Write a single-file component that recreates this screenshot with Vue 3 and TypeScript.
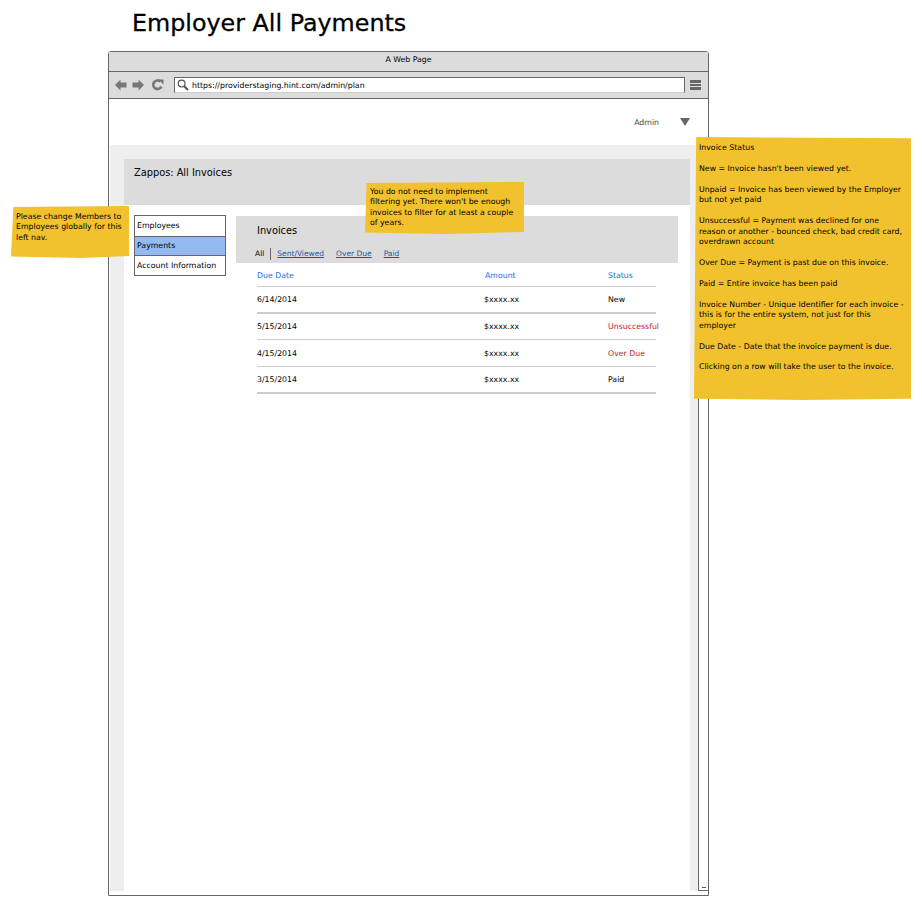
<template>
  <div class="screen">
    <h1 class="title">Employer All Payments</h1>

    <div class="window">
      <div class="titlebar">A Web Page</div>
      <div class="toolbar">
        <svg class="nav" width="56" height="14" viewBox="0 0 56 14">
          <path d="M0 7 L5.5 1.5 V4.5 H11.5 V9.5 H5.5 V12.5 Z" fill="#777" />
          <path d="M29 7 L23.5 1.5 V4.5 H17.5 V9.5 H23.5 V12.5 Z" fill="#777" />
          <path d="M45.5 3.6 A4.3 4.3 0 1 0 46.4 8.6" fill="none" stroke="#777" stroke-width="2.6" />
          <path d="M43.5 1.5 L48.5 1.5 L48.5 6.5 Z" fill="#777" />
        </svg>
        <div class="urlbox">
          <svg width="12" height="12" viewBox="0 0 12 12">
            <circle cx="4.6" cy="4.6" r="3.4" fill="none" stroke="#555" stroke-width="1.2" />
            <path d="M7.2 7.2 L11 11" stroke="#555" stroke-width="2" />
          </svg>
          <span>https://providerstaging.hint.com/admin/plan</span>
        </div>
        <div class="burger"><i></i><i></i><i></i></div>
      </div>

      <div class="topbar">
        <span class="admin">Admin</span>
        <span class="caret"></span>
      </div>

      <div class="viewport">
        <div class="page">
          <div class="content">
            <div class="band">Zappos: All Invoices</div>
            <div class="columns">
              <ul class="sidenav">
                <li>Employees</li>
                <li class="active">Payments</li>
                <li>Account Information</li>
              </ul>
              <div class="main">
                <div class="main-head">
                  <div class="main-title">Invoices</div>
                  <div class="tabs">
                    <span class="tab-all">All</span>
                    <a>Sent/Viewed</a>
                    <a>Over Due</a>
                    <a>Paid</a>
                  </div>
                </div>
                <div class="table">
                  <div class="row head">
                    <span>Due Date</span>
                    <span class="amt-head">Amount</span>
                    <span>Status</span>
                  </div>
                  <div
                    v-for="inv in invoices"
                    :key="inv.date"
                    class="row"
                    :class="{ thick: inv.thick }"
                  >
                    <span>{{ inv.date }}</span>
                    <span>$xxxx.xx</span>
                    <span :class="{ bad: inv.bad }" class="status">{{ inv.status }}</span>
                  </div>
                </div>
              </div>
            </div>
          </div>
        </div>
        <div class="scrollbar"><span class="thumb"></span></div>
      </div>
    </div>

    <div class="note note-left">
      Please change Members to<br />Employees globally for this<br />left nav.
    </div>
    <div class="note note-mid">
      You do not need to implement<br />filtering yet. There won't be enough<br />invoices to filter
      for at least a couple<br />of years.
    </div>
    <div class="note note-right">
      <p v-for="(para, i) in legend" :key="i">{{ para }}</p>
    </div>
  </div>
</template>

<script setup lang="ts">
const invoices = [
  { date: "6/14/2014", status: "New", bad: false, thick: true },
  { date: "5/15/2014", status: "Unsuccessful", bad: true, thick: false },
  { date: "4/15/2014", status: "Over Due", bad: true, thick: false },
  { date: "3/15/2014", status: "Paid", bad: false, thick: true },
];

// line breaks follow the sticky note in the mockup
const legend = [
  "Invoice Status",
  "New = Invoice hasn't been viewed yet.",
  "Unpaid = Invoice has been viewed by the Employer\nbut not yet paid",
  "Unsuccessful = Payment was declined for one\nreason or another - bounced check, bad credit card,\noverdrawn account",
  "Over Due = Payment is past due on this invoice.",
  "Paid = Entire invoice has been paid",
  "Invoice Number - Unique Identifier for each invoice -\nthis is for the entire system, not just for this\nemployer",
  "Due Date - Date that the invoice payment is due.",
  "Clicking on a row will take the user to the invoice.",
];
</script>

<style>
html,
body {
  margin: 0;
  background: #fff;
}
</style>

<style scoped>
.screen {
  position: relative;
  width: 922px;
  height: 906px;
  overflow: hidden;
  font-family: "DejaVu Sans", sans-serif;
  font-size: 7.8px;
  color: #000;
}
.title {
  margin: 0;
  padding: 8px 0 0 132px;
  height: 51px;
  box-sizing: border-box;
  font-size: 23.8px;
  line-height: 30px;
  font-weight: 400;
  -webkit-text-stroke: 0.3px #000;
}
.window {
  margin-left: 108px;
  width: 601px;
  height: 845px;
  box-sizing: border-box;
  border: 1px solid #666;
  border-top-width: 1.5px;
  border-right-width: 1.5px;
  border-radius: 3px 3px 0 0;
  display: flex;
  flex-direction: column;
}
.titlebar {
  height: 19px;
  background: #dcdcdc;
  border-bottom: 1px solid #666;
  text-align: center;
  line-height: 15px;
}
.toolbar {
  height: 27px;
  background: #dcdcdc;
  border-bottom: 1px solid #666;
  display: flex;
  align-items: center;
  padding-left: 6px;
  box-sizing: border-box;
}
.nav {
  flex: none;
  margin-right: 3px;
}
.urlbox {
  width: 511px;
  height: 16px;
  box-sizing: border-box;
  background: #fff;
  border: 1px solid #666;
  border-bottom-color: #ccc;
  display: flex;
  align-items: center;
  gap: 3px;
  padding-left: 2px;
}
.burger {
  margin-left: 5px;
  display: flex;
  flex-direction: column;
  gap: 1px;
}
.burger i {
  display: block;
  width: 11px;
  height: 2.4px;
  background: #666;
}
.topbar {
  height: 46px;
  display: flex;
  align-items: center;
  justify-content: flex-end;
  padding: 0 18px 0 0;
  box-sizing: border-box;
}
.admin {
  color: #444;
  margin-right: 21px;
}
.caret {
  width: 0;
  height: 0;
  border-left: 5.5px solid transparent;
  border-right: 5.5px solid transparent;
  border-top: 8px solid #666;
}
.viewport {
  flex: 1;
  display: flex;
  min-height: 0;
}
.page {
  flex: 1;
  background: #eee;
  padding: 14px 8px 0 14px;
  margin-bottom: 4px;
  margin-left: 1px;
  display: flex;
  min-width: 0;
}
.content {
  flex: 1;
  background: #fff;
  min-width: 0;
}
.band {
  height: 46px;
  background: #dcdcdc;
  padding: 7px 0 0 10px;
  box-sizing: border-box;
  font-size: 9.8px;
  line-height: 13px;
}
.columns {
  display: flex;
  align-items: flex-start;
  padding: 10px 12px 0 10px;
  gap: 10px;
}
.sidenav {
  list-style: none;
  margin: 0;
  padding: 0;
  width: 92px;
  flex: none;
  box-sizing: border-box;
  border: 1px solid #666;
}
.sidenav li {
  height: 19.5px;
  line-height: 19px;
  padding-left: 2px;
  box-sizing: border-box;
}
.sidenav .active {
  height: 20px;
  line-height: 18px;
  background: #94bbf1;
  border-top: 1px solid #666;
  border-bottom: 1px solid #666;
}
.main {
  flex: 1;
  min-width: 0;
  margin-top: 1px;
}
.main-head {
  height: 47px;
  background: #dcdcdc;
  padding: 8px 0 0 19px;
  box-sizing: border-box;
}
.main-title {
  padding-left: 2px;
  font-size: 9.8px;
  line-height: 14px;
}
.tabs {
  display: flex;
  align-items: center;
  margin-top: 10px;
  gap: 12px;
  font-size: 7.5px;
  line-height: 12px;
}
.tab-all {
  padding-right: 6px;
  margin-right: -6px;
  border-right: 1px solid #666;
}
.tabs a {
  color: #1a5aa0;
  text-decoration: underline;
}
.table {
  margin: 0 22px 0 21px;
}
.row {
  display: grid;
  grid-template-columns: 227px 124px 1fr;
  height: 26.7px;
  box-sizing: border-box;
  border-bottom: 1px solid #ccc;
  align-items: center;
}
.row.thick {
  border-bottom-width: 2px;
}
.row.head {
  height: 24px;
  color: #1c6be0;
  padding-top: 1px;
}
.amt-head {
  padding-left: 1px;
}
.status {
  white-space: nowrap;
}
.bad {
  color: #c8202a;
}
.scrollbar {
  width: 10px;
  margin-bottom: 4px;
  box-sizing: border-box;
  border-left: 1px solid #666;
  border-bottom: 1px solid #666;
  position: relative;
}
.thumb {
  position: absolute;
  left: 3px;
  bottom: 2px;
  width: 4px;
  height: 1px;
  background: #555;
}
.note {
  position: absolute;
  background: #f2c12e;
  box-sizing: border-box;
  line-height: 10.45px;
  padding: 5px;
  z-index: 2;
  white-space: nowrap;
}
.note-left {
  left: 11px;
  top: 206px;
  width: 118px;
  height: 52px;
  padding: 6px 5px;
  clip-path: polygon(2% 2%, 100% 0, 100% 96%, 60% 100%, 0 97%);
}
.note-mid {
  left: 365px;
  top: 182px;
  width: 159px;
  height: 52px;
  clip-path: polygon(1% 2%, 100% 0, 100% 96%, 50% 100%, 0 97%);
}
.note-right {
  left: 694px;
  top: 137px;
  width: 217px;
  height: 263px;
  padding-top: 6px;
  clip-path: polygon(1% 0, 100% 0.5%, 100% 99.5%, 50% 100%, 0 99.5%);
}
.note-right p {
  margin: 0 0 10.45px;
  white-space: pre-line;
}
</style>
